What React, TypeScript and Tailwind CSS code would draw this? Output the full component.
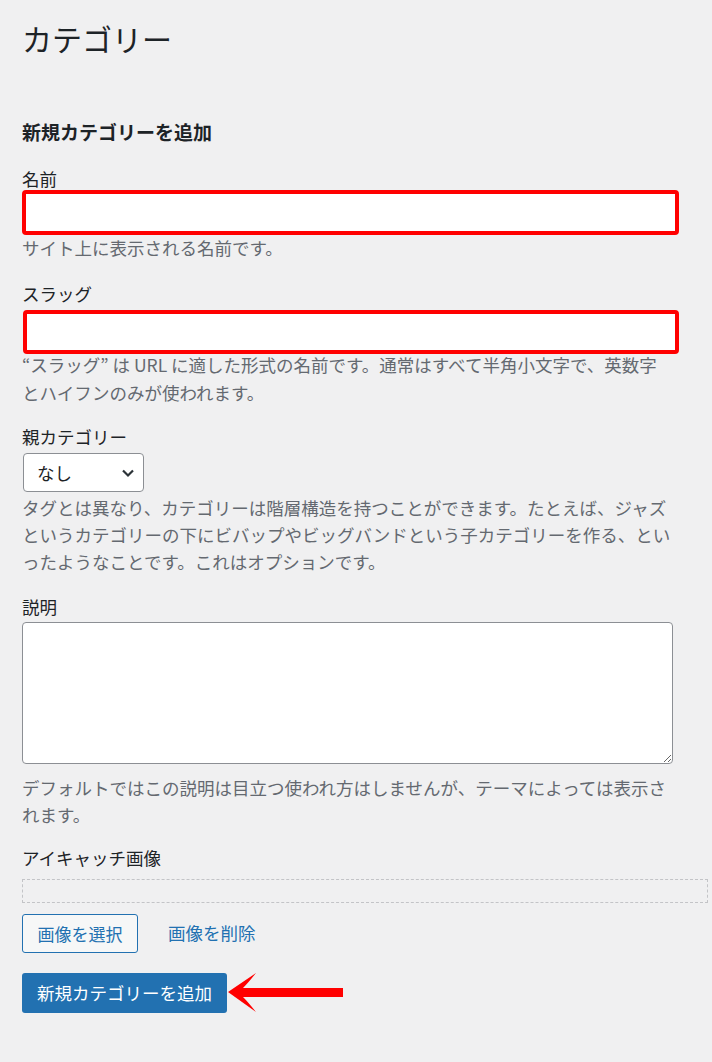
import React from "react";

const font = "font-['Noto_Sans_CJK_JP','Noto_Sans',sans-serif]";

function Arrow() {
  // red annotation arrow pointing at the submit button
  return (
    <svg width="118" height="44" viewBox="0 0 118 44" className="ml-[1px] shrink-0">
      <path
        d="M0 21 L28 2 Q20 12 15 17 L115 17 L115 26 L15 26 Q20 31 28 41 Z"
        fill="#ff0000"
      />
    </svg>
  );
}

export default function App() {
  return (
    <div className={`min-h-screen bg-[#f0f0f1] pl-[22px] pt-[14px] text-[#1d2327] ${font}`}>
      <h1 className="text-[30px] leading-[48px] font-normal">カテゴリー</h1>

      <h2 className="mt-[56px] text-[19px] leading-[28px] font-bold">新規カテゴリーを追加</h2>

      {/* 名前 */}
      <div className="mt-[22px] text-[17.5px] leading-[21px]">名前</div>
      <div className="mt-px h-[45px] w-[657px] rounded-[4px] border-4 border-[#ff0000] bg-white" />
      <p className="mt-[2px] text-[17.5px] leading-[22px] text-[#646970]">サイト上に表示される名前です。</p>

      {/* スラッグ */}
      <div className="mt-[24px] text-[17.5px] leading-[22px]">スラッグ</div>
      <div className="ml-px mt-[5px] h-[44px] w-[656px] rounded-[4px] border-4 border-[#ff0000] bg-white" />
      <p className="mt-[-3px] text-[17.5px] leading-[28px] text-[#646970]">
        “スラッグ” は URL に適した形式の名前です。通常はすべて半角小文字で、英数字
        <br />
        とハイフンのみが使われます。
      </p>

      {/* 親カテゴリー */}
      <div className="mt-[19px] text-[17.5px] leading-[22px]">親カテゴリー</div>
      <div className="ml-px mt-[5px] flex h-[39px] w-[121px] items-center justify-between rounded-[4px] border border-[#8c8f94] bg-white pl-[13px] pr-[8px]">
        <span className="text-[17.5px] leading-[22px]">なし</span>
        <svg width="14" height="10" viewBox="0 0 14 10">
          <path d="M2 2.5 L7 7.5 L12 2.5" fill="none" stroke="#2c3338" strokeWidth="2.2" />
        </svg>
      </div>
      <p className="mt-[2px] text-[17.5px] leading-[27px] text-[#646970]">
        タグとは異なり、カテゴリーは階層構造を持つことができます。たとえば、ジャズ
        <br />
        というカテゴリーの下にビバップやビッグバンドという子カテゴリーを作る、とい
        <br />
        ったようなことです。これはオプションです。
      </p>

      {/* 説明 */}
      <div className="mt-[21px] text-[17.5px] leading-[22px]">説明</div>
      <textarea className="mt-[4px] block h-[142px] w-[651px] resize-y rounded-[4px] border border-[#8c8f94] bg-white" />
      <p className="mt-[10px] text-[17.5px] leading-[27px] text-[#646970]">
        デフォルトではこの説明は目立つ使われ方はしませんが、テーマによっては表示さ
        <br />
        れます。
      </p>

      {/* アイキャッチ画像 */}
      <div className="mt-[19px] text-[17.5px] leading-[22px]">アイキャッチ画像</div>
      <div className="mt-[10px] h-[24px] w-[686px] border border-dashed border-[#c3c4c7]" />

      <div className="mt-[11px] flex items-center">
        <button
          type="button"
          className="flex h-[39px] w-[116px] items-center justify-center rounded-[3px] border border-[#2271b1] bg-[#f6f7f7] text-[17px] text-[#2271b1]"
        >
          画像を選択
        </button>
        <span className="ml-[30px] text-[17.5px] text-[#2271b1]">画像を削除</span>
      </div>

      <div className="mt-[18px] flex items-center">
        <button
          type="button"
          className="flex h-[40px] w-[205px] items-center justify-center rounded-[3px] bg-[#2271b1] text-[17.5px] text-white"
        >
          新規カテゴリーを追加
        </button>
        <Arrow />
      </div>
    </div>
  );
}
